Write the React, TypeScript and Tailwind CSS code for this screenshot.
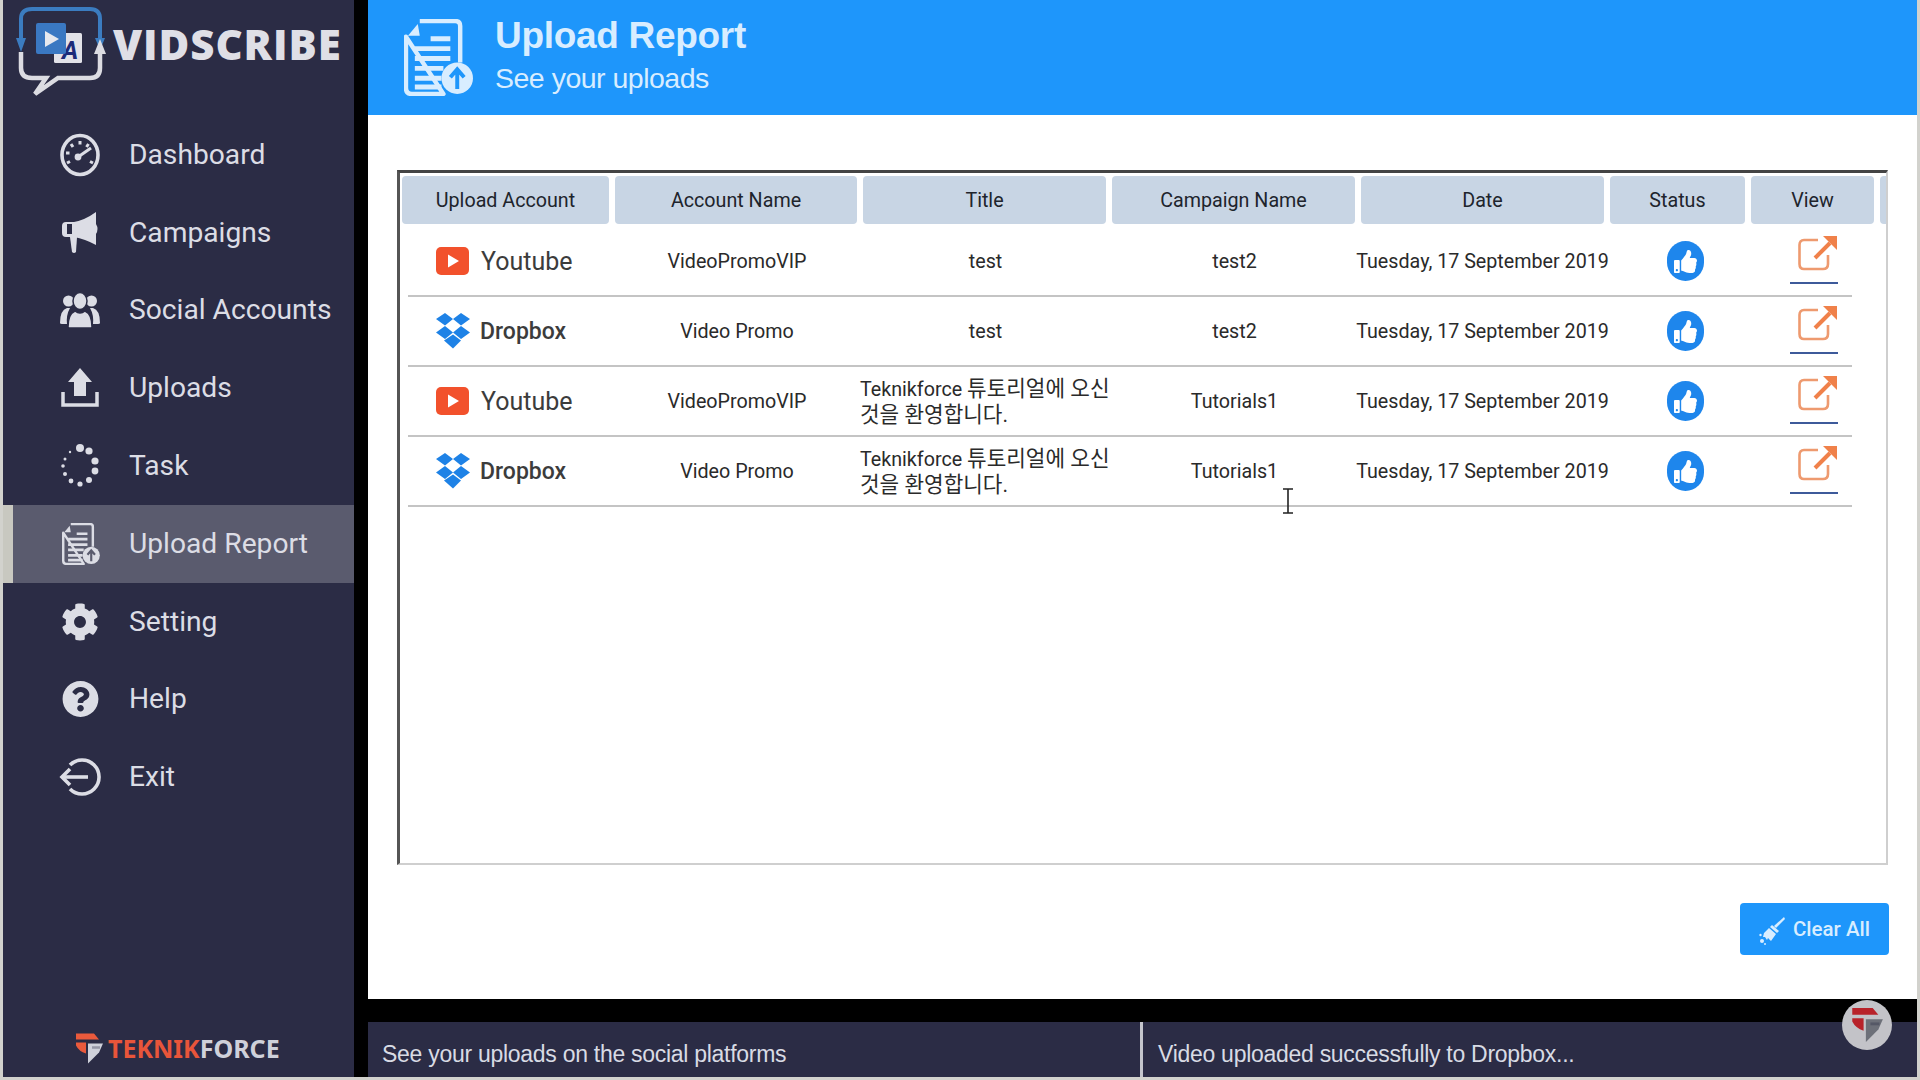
import React from 'react';
import { FaCog, FaQuestionCircle, FaThumbsUp } from 'react-icons/fa';

const COLS = 'grid grid-cols-[202px_242px_243px_243px_243px_135px_123px] gap-x-[6px]';

/** Paper sheet with lines and the little upload badge, used in the header and the sidebar. */
function ReportIcon({ className, badgeFill }: { className?: string; badgeFill: string }) {
  return (
    <svg viewBox="0 0 70 78" className={className} fill="none" stroke="currentColor">
      <path d="M16 2 H52 Q57 2 57 7 V44 M40 76 H8 Q2 76 2 70 V18 Z" strokeWidth="4.5" strokeLinejoin="round" />
      <path d="M14 5 L4 17 L16 17 Z" fill="currentColor" stroke="none" />
      <path d="M27 20 H47 M11 30 H47 M11 40 H47 M11 50 H40 M11 60 H38 M11 69 H38" strokeWidth="5" />
      <circle cx="54" cy="60" r="16" fill="currentColor" stroke="none" />
      <path d="M54 71 V53 M47 59 L54 51 L61 59" stroke={badgeFill} strokeWidth="4" fill="none" />
    </svg>
  );
}

function GaugeIcon() {
  return (
    <svg viewBox="0 0 40 44" className="h-[44px] w-[40px]" fill="none" stroke="currentColor">
      <ellipse cx="20" cy="22" rx="18" ry="19.5" strokeWidth="3.6" />
      <path d="M20 8 V11.5 M11 11 L13 14 M28.5 11 L26.5 14 M6 20 H9.5 M7 30 L10 28.5 M33 30 L30 28.5" strokeWidth="3" />
      <circle cx="18" cy="24" r="3.4" fill="currentColor" stroke="none" />
      <path d="M18 24 L31 15" strokeWidth="3" />
    </svg>
  );
}

function MegaphoneIcon() {
  return (
    <svg viewBox="0 0 38 42" className="h-[42px] w-[38px]" fill="currentColor">
      <path d="M1 14 Q1 10 5 10 H13 Q24 8 35 0 V12 Q38 17 35 22 V33 Q24 27 13 25 H5 Q1 25 1 21 Z" />
      <path d="M9 25 H16 L15 40 Q13 42 11 40 Z" />
      <rect x="6" y="12" width="5" height="10" fill="#2b2c45" />
    </svg>
  );
}

function PeopleIcon() {
  return (
    <svg viewBox="0 0 40 38" className="h-[38px] w-[40px]" fill="currentColor">
      <circle cx="8.5" cy="10" r="5.5" />
      <circle cx="31.5" cy="10" r="5.5" />
      <path d="M0 32 Q0 19 7 17 L10 17 Q6 24 7 33 H2 Q0 33 0 32 Z" />
      <path d="M40 32 Q40 19 33 17 L30 17 Q34 24 33 33 H38 Q40 33 40 32 Z" />
      <ellipse cx="20" cy="10" rx="7" ry="8.5" stroke="#2b2c45" strokeWidth="1.5" />
      <path d="M8 36 Q8 23 15 20 Q20 24 25 20 Q32 23 32 36 Q32 37 30 37 H10 Q8 37 8 36 Z" stroke="#2b2c45" strokeWidth="1.5" />
    </svg>
  );
}

function UploadIcon() {
  return (
    <svg viewBox="0 0 38 40" className="h-[40px] w-[38px]" fill="currentColor">
      <path d="M19 0 L31 14 H25 V28 H13 V14 H7 Z" />
      <path d="M2 24 V37 H36 V24" fill="none" stroke="currentColor" strokeWidth="3.5" />
    </svg>
  );
}

function TaskIcon() {
  // dots shrink going round the ring, biggest at the top
  const dots = [
    [19, 4, 4], [28, 7, 3.6], [34, 17, 3.6], [34, 27, 3.4], [28, 36, 3],
    [19, 40, 2.6], [10, 37, 2.4], [4, 30, 2], [2, 22, 1.8], [4, 15, 1.5], [9, 8, 1.2],
  ];
  return (
    <svg viewBox="0 0 38 44" className="h-[44px] w-[38px]" fill="currentColor">
      {dots.map(([cx, cy, r], i) => (
        <circle key={i} cx={cx} cy={cy} r={r} />
      ))}
    </svg>
  );
}

function ExitIcon() {
  return (
    <svg viewBox="0 0 42 38" className="h-[38px] w-[42px]" fill="none" stroke="currentColor">
      <path d="M11 7 A17 17 0 1 1 11 31" strokeWidth="3.6" />
      <path d="M3 19 H29" strokeWidth="3.6" />
      <path d="M11 11 L3 19 L11 27" strokeWidth="3.6" />
    </svg>
  );
}

function BrushIcon() {
  return (
    <svg viewBox="0 0 26 28" className="mr-[8px] mt-[3px] h-[28px] w-[26px]" fill="currentColor">
      <path d="M25 0 L26 2 L17 11 L15 9 Z" />
      <path d="M13 8 L20 14 L18 16 L11 10 Z" />
      <path d="M10 11 L17 17 L12 24 L9 21 L8 23 L6 20 L4 20 L5 16 Z" />
      <circle cx="3" cy="24" r="2" />
      <circle cx="1.5" cy="18" r="1.2" />
      <circle cx="6" cy="27" r="1" />
    </svg>
  );
}

function VidscribeLogo() {
  return (
    <svg viewBox="0 0 90 90" className="h-[90px] w-[90px] shrink-0">
      <path d="M5 40 V13 Q5 3 16 3 H74 Q84 3 84 13 V36" fill="none" stroke="#3b7cc0" strokeWidth="4" />
      <path d="M0 32 L10 32 L5 46 Z M79 32 L89 32 L84 44 Z" fill="#3b7cc0" />
      <path d="M5 46 V62 Q5 72 16 72 H30 L19 88 L42 72 H74 Q84 72 84 62 V42" fill="none" stroke="#dcdce2" strokeWidth="4.5" />
      <path d="M78 48 L84 33 L90 48 Z" fill="#dcdce2" />
      <rect x="38" y="27" width="28" height="30" rx="1.5" fill="#e2e2e8" />
      <text x="46" y="53" fontSize="25" fontWeight="700" fontStyle="italic" fill="#1c2a78" fontFamily="Roboto, sans-serif">A</text>
      <rect x="20" y="17" width="30" height="31" rx="2" fill="#3a78c2" />
      <path d="M29 25 L43 33 L29 41 Z" fill="#e6e8ee" />
    </svg>
  );
}

/** The T/F mark. Colours differ between the footer logo and the round badge. */
function TfMark({ className, top, bottom }: { className?: string; top: string; bottom: string }) {
  return (
    <svg viewBox="0 0 28 30" className={className}>
      <path d="M1 0 H19 L24 6 H1 Z M1 9 H11 V20 Q4 18 1 12 Z" fill={top} />
      <path d="M13 10 H28 L24 19 L13 30 Z" fill={bottom} />
      <path d="M17 14 H25" stroke="#2b2c45" strokeWidth="2.5" opacity="0.35" />
    </svg>
  );
}

function YoutubeIcon() {
  return (
    <svg viewBox="0 0 33 28" className="h-[28px] w-[33px]">
      <rect width="33" height="28" rx="5" fill="#f2512c" />
      <path d="M12 7.5 L23 14 L12 20.5 Z" fill="#ffffff" />
    </svg>
  );
}

function DropboxIcon() {
  return (
    <svg viewBox="0 0 34 36" className="h-[36px] w-[34px]" fill="#1e82e6">
      <path d="M9 0 L17 6 L9 12.5 L0 6 Z M25 0 L34 6 L25 12.5 L17 6 Z" />
      <path d="M9 13 L17 19.5 L9 26 L0 19.5 Z M25 13 L34 19.5 L25 26 L17 19.5 Z" />
      <path d="M17 21.5 L25 27.5 L17 35.5 L8 27.5 Z" />
    </svg>
  );
}

function OpenLinkIcon() {
  return (
    <svg viewBox="0 0 40 36" className="ml-[8px] h-[36px] w-[40px]" fill="none">
      <path d="M20 5 H6 Q1.5 5 1.5 10 V29 Q1.5 34 6 34 H25 Q30 34 30 29 V20" stroke="#ee9a6f" strokeWidth="2.6" />
      <path d="M17 23 L32 8" stroke="#f0814a" strokeWidth="4" />
      <path d="M25 1 H39 V15 Z" fill="#f0814a" />
    </svg>
  );
}

const NAV = [
  { label: 'Dashboard', icon: <GaugeIcon /> },
  { label: 'Campaigns', icon: <MegaphoneIcon /> },
  { label: 'Social Accounts', icon: <PeopleIcon /> },
  { label: 'Uploads', icon: <UploadIcon /> },
  { label: 'Task', icon: <TaskIcon /> },
  { label: 'Upload Report', icon: <ReportIcon className="ml-[1px] h-[42px] w-[38px]" badgeFill="#5a5b6e" />, active: true },
  { label: 'Setting', icon: <FaCog className="h-[38px] w-[38px]" /> },
  { label: 'Help', icon: <FaQuestionCircle className="h-[40px] w-[37px]" /> },
  { label: 'Exit', icon: <ExitIcon /> },
];

const HEADERS = [
  { label: 'Upload Account', w: 'w-[207px]' },
  { label: 'Account Name', w: 'w-[242px]' },
  { label: 'Title', w: 'w-[243px]' },
  { label: 'Campaign Name', w: 'w-[243px]' },
  { label: 'Date', w: 'w-[243px]' },
  { label: 'Status', w: 'w-[135px]' },
  { label: 'View', w: 'w-[123px]' },
];

const ROWS = [
  { kind: 'youtube', account: 'VideoPromoVIP', title: 'test', campaign: 'test2' },
  { kind: 'dropbox', account: 'Video Promo', title: 'test', campaign: 'test2' },
  { kind: 'youtube', account: 'VideoPromoVIP', title: 'kr', campaign: 'Tutorials1' },
  { kind: 'dropbox', account: 'Video Promo', title: 'kr', campaign: 'Tutorials1' },
];

function Sidebar() {
  return (
    <aside className="flex h-full w-[351px] shrink-0 flex-col bg-[#2b2c45] text-[#dcdde5]">
      <div className="flex h-[116px] items-start pl-[13px] pt-[6px]">
        <VidscribeLogo />
        <span className="ml-[7px] mt-[13px] font-['Open_Sans'] text-[42px] font-extrabold leading-[50px] tracking-[0.9px] text-[#dfdfe6]">
          VIDSCRIBE
        </span>
      </div>
      <nav className="flex flex-col">
        {NAV.map((item) => (
          <div
            key={item.label}
            className={`flex h-[77.8px] items-center ${item.active ? 'border-l-[10px] border-[#c8c8c0] bg-[#5a5b6e] pl-[45px]' : 'pl-[55px]'}`}
          >
            <span className="flex w-[44px] shrink-0 justify-center">{item.icon}</span>
            <span className="ml-[27px] text-[28.2px] leading-none">{item.label}</span>
          </div>
        ))}
      </nav>
      <div className="mt-auto flex items-center pb-[13px] pl-[72px]">
        <TfMark className="h-[31px] w-[28px]" top="#ea5a3c" bottom="#cfd1da" />
        <span className="ml-[5px] font-['Noto_Sans'] text-[25px] font-bold leading-[32px]">
          <span className="text-[#e8553a]">TEKNIK</span>
          <span className="text-[#cfd1da]">FORCE</span>
        </span>
      </div>
    </aside>
  );
}

function UploadTable() {
  return (
    <div className="ml-[29px] mt-[55px] h-[695px] w-[1491px] overflow-hidden border-b-2 border-l-[3px] border-r-2 border-t-[3px] border-b-[#cfcfcf] border-l-[#555555] border-r-[#cfcfcf] border-t-[#444444]">
      <div className="flex gap-x-[6px] pl-[2px] pt-[3px]">
        {HEADERS.map((h) => (
          <div
            key={h.label}
            className={`${h.w} flex h-[48px] shrink-0 items-center justify-center rounded-[4px] bg-[#c8d5e4] pt-[2px] text-[19.7px] text-[#20242c]`}
          >
            {h.label}
          </div>
        ))}
        <div className="h-[48px] w-[10px] shrink-0 rounded-[4px] bg-[#c8d5e4]" />
      </div>
      <div className="ml-[8px] mt-[3px] w-[1444px]">
        {ROWS.map((row, i) => (
          <div key={i} className={`${COLS} h-[70px] border-b-2 border-[#c4c4c4] text-[19.7px] text-[#2a2a2a]`}>
            <div className="flex items-center pl-[28px]">
              {row.kind === 'youtube' ? <YoutubeIcon /> : <DropboxIcon />}
              {row.kind === 'youtube' ? (
                <span className="ml-[12px] pt-[2px] text-[25px] text-[#3c3c3c]">Youtube</span>
              ) : (
                <span className="ml-[10px] pt-[2px] text-[23px] font-medium text-[#3c3c3c]">Dropbox</span>
              )}
            </div>
            <div className="flex items-center justify-center pt-[1px]">{row.account}</div>
            {row.title === 'kr' ? (
              <div className="-ml-[4px] flex items-center whitespace-nowrap pt-[1px] font-['Roboto','Noto_Sans_CJK_KR',sans-serif] leading-[25px]">
                <span>
                  Teknikforce <span className="text-[21.3px]">튜토리얼에 오신</span>
                  <br />
                  <span className="text-[21.3px]">것을 환영합니다.</span>
                </span>
              </div>
            ) : (
              <div className="flex items-center justify-center pt-[1px]">{row.title}</div>
            )}
            <div className="flex items-center justify-center pt-[1px]">{row.campaign}</div>
            <div className="-ml-[2px] flex items-center justify-center whitespace-nowrap pt-[1px]">Tuesday, 17 September 2019</div>
            <div className="flex items-center justify-center pl-[14px]">
              <span className="flex h-[40px] w-[37px] items-center justify-center rounded-full bg-[#1e86ec]">
                <FaThumbsUp className="h-[23px] w-[23px] text-white" />
              </span>
            </div>
            <div className="flex flex-col items-center pt-[8px]">
              <OpenLinkIcon />
              <span className="mt-[11px] h-[2px] w-[48px] bg-[#3d5a9a]" />
            </div>
          </div>
        ))}
      </div>
    </div>
  );
}

export default function App() {
  return (
    <div className="relative h-[1080px] w-[1920px] overflow-hidden bg-[#d2d2cd] pb-[3px] pl-[3px] pr-[3px] font-['Roboto',sans-serif]">
      <div className="flex h-full bg-black">
        <Sidebar />
        <main className="ml-[14px] flex min-w-0 flex-1 flex-col">
          <header className="flex h-[115px] items-center bg-[#1e96fb] pl-[36px] text-[#d8edff]">
            <ReportIcon className="h-[77px] w-[69px]" badgeFill="#1e96fb" />
            <div className="ml-[22px] flex flex-col pb-[1px] font-['Liberation_Sans']">
              <span className="text-[37px] font-bold leading-[43px] tracking-[-0.3px]">Upload Report</span>
              <span className="text-[28.5px] leading-[43px] tracking-[-0.5px]">See your uploads</span>
            </div>
          </header>
          <section className="h-[884px] bg-white">
            <UploadTable />
            <div className="mr-[28px] mt-[38px] flex justify-end">
              <button className="flex h-[52px] w-[149px] items-center justify-center rounded-[4px] bg-[#1e96fb] text-[20.5px] font-medium text-[#d8edff]">
                <BrushIcon />
                Clear All
              </button>
            </div>
          </section>
          <footer className="mt-[23px] flex h-[55px] bg-[#2b2c45] font-['Liberation_Sans'] text-[23px] tracking-[-0.28px] text-[#d8dbe4]">
            <div className="flex w-[775px] items-center border-r-[3px] border-[#c4c5cc] pl-[14px] pt-[9px]">
              See your uploads on the social platforms
            </div>
            <div className="flex flex-1 items-center pl-[15px] pt-[9px]">Video uploaded successfully to Dropbox...</div>
          </footer>
        </main>
      </div>
      {/* floating brand badge */}
      <div className="absolute left-[1842px] top-[1000px] flex h-[50px] w-[50px] items-center justify-center rounded-full bg-[#c3c3c8]">
        <TfMark className="h-[34px] w-[34px]" top="#b8222a" bottom="#6d7079" />
      </div>
      {/* text cursor caught in the capture */}
      <svg viewBox="0 0 10 26" className="absolute left-[1283px] top-[488px] h-[26px] w-[10px]" fill="none" stroke="#222222" strokeWidth="1.6">
        <path d="M0 1 H10 M0 25 H10 M5 1 V25" />
      </svg>
    </div>
  );
}
